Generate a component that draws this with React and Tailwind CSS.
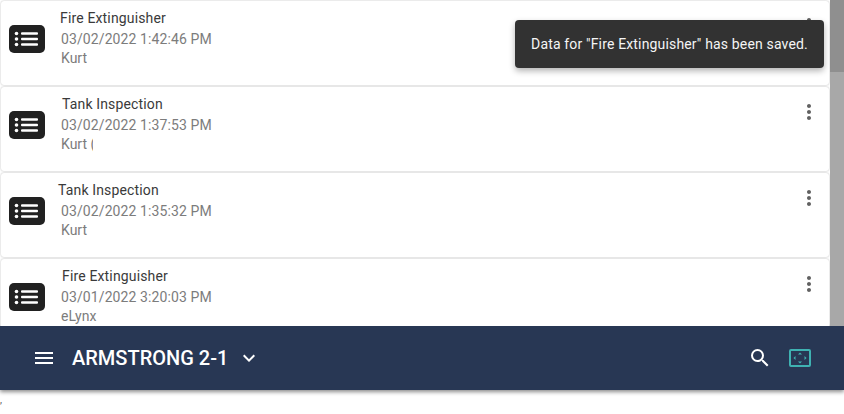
import React from "react";
import { MdMenu, MdKeyboardArrowDown, MdSearch, MdMoreVert } from "react-icons/md";

const rows = [
  { title: "Fire Extinguisher", titleClass: "ml-[-1px]", date: "03/02/2022 1:42:46 PM", user: "Kurt", userClass: "w-[26px]" },
  { title: "Tank Inspection", titleClass: "ml-px", date: "03/02/2022 1:37:53 PM", user: "Kurt (", userClass: "w-[32px]" },
  { title: "Tank Inspection", titleClass: "ml-[-3px]", date: "03/02/2022 1:35:32 PM", user: "Kurt", userClass: "w-[32px]" },
  { title: "Fire Extinguisher", titleClass: "ml-px", date: "03/01/2022 3:20:03 PM", user: "eLynx", userClass: "w-[40px]" },
];

function ListIcon() {
  return (
    <div className="flex h-[28px] w-[36px] shrink-0 items-center justify-center rounded-[5px] bg-[#212121]">
      <svg width="26" height="16" viewBox="0 0 26 16" fill="none">
        <circle cx="2.5" cy="2.5" r="1.8" fill="#fff" />
        <circle cx="2.5" cy="8" r="1.8" fill="#fff" />
        <circle cx="2.5" cy="13.5" r="1.8" fill="#fff" />
        <rect x="7" y="1.2" width="17" height="2.6" rx="1" fill="#fff" />
        <rect x="7" y="6.7" width="17" height="2.6" rx="1" fill="#fff" />
        <rect x="7" y="12.2" width="17" height="2.6" rx="1" fill="#fff" />
      </svg>
    </div>
  );
}

function Row({ row }) {
  return (
    <div className="flex h-[84px] shrink-0 rounded-[3px] bg-white pl-[8px] pr-[8px] shadow-[0_0_2px_rgba(0,0,0,0.3)]">
      <div className="mt-[24px]">
        <ListIcon />
      </div>
      <div className="ml-[16px] flex-1 pt-[7px] text-[14px] leading-[20px]">
        <div className={`mb-px tracking-[0.15px] text-[#3a3a3a] ${row.titleClass}`}>{row.title}</div>
        <div className="tracking-[0.1px] text-[#7c7c7c]">{row.date}</div>
        <div className={`mt-[-1px] overflow-hidden whitespace-nowrap text-[#7c7c7c] ${row.userClass}`}>{row.user}</div>
      </div>
      <MdMoreVert className="mt-[13px] text-[#616161]" size={24} />
    </div>
  );
}

export default function App() {
  return (
    <div className="relative h-[414px] w-[844px] overflow-hidden bg-white font-['Roboto',sans-serif]">
      <div className="flex h-[326px] overflow-hidden">
        {/* list */}
        <div className="flex flex-1 flex-col gap-[2px] pl-px pr-px pt-px">
          {rows.map((r, i) => (
            <Row key={i} row={r} />
          ))}
        </div>
        {/* scrollbar */}
        <div className="w-[14px] bg-[#a8a8a8]">
          <div className="h-[72px] bg-[#8f8f8f]" />
        </div>
      </div>

      {/* bottom bar */}
      <div className="flex h-[64px] items-center bg-[#283754] pl-[32px] pr-[32px] shadow-[0_2px_4px_rgba(0,0,0,0.45)]">
        <MdMenu className="text-white" size={24} />
        <span className="ml-[16px] text-[20px] font-medium leading-[24px] text-white">ARMSTRONG 2-1</span>
        <MdKeyboardArrowDown className="ml-[9px] text-white" size={24} />
        <div className="flex-1" />
        <MdSearch className="text-white" size={24} />
        <svg className="ml-[16px]" width="24" height="20" viewBox="0 0 24 20" fill="none">
          <rect x="2" y="2" width="20" height="16" rx="1" stroke="#3fb2b2" strokeWidth="2" />
          <path d="M12 4.5l-2 2h4zM12 15.5l-2-2h4zM5.5 10l2-2v4zM18.5 10l-2-2v4z" fill="#3fb2b2" />
        </svg>
      </div>

      <div className="mt-[5px] text-[10px] leading-[10px] text-[#555]">,</div>

      {/* toast */}
      <div className="absolute left-[515px] top-[20px] flex h-[48px] w-[309px] items-center justify-center rounded-[4px] bg-[#323232] text-[14px] tracking-[0.16px] text-[#f5f5f5] shadow-[0_3px_6px_rgba(0,0,0,0.3)]">
        Data for "Fire Extinguisher" has been saved.
      </div>
    </div>
  );
}
